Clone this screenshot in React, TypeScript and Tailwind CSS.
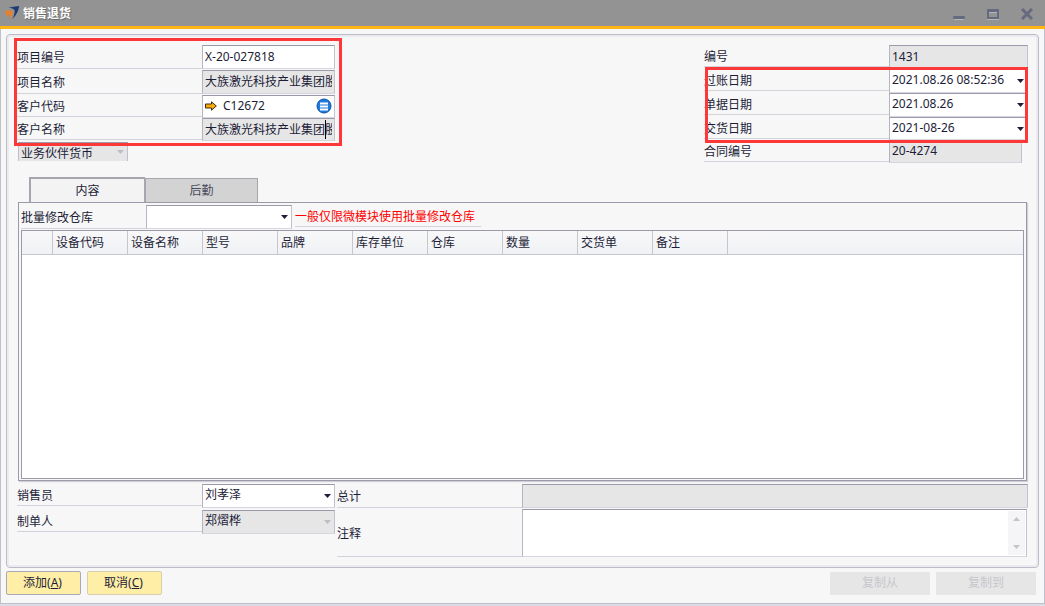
import { useState } from 'react';
import type { ReactNode } from 'react';
import clsx from 'clsx';

const columns = ['设备代码', '设备名称', '型号', '品牌', '库存单位', '仓库', '数量', '交货单', '备注'];

const company = '大族激光科技产业集团股份有限公司';

const fieldClass =
    'block w-full h-full min-w-0 border border-t-[#9a9aa8] border-l-[#b4b4c2] border-r-[#c2c2ce] border-b-[#d6d6de] rounded-none px-0.5 pb-0.5 outline-none';

const Logo = () => (
    <svg width="16" height="16" viewBox="0 0 16 16" aria-hidden="true">
        <path d="M4.5 2.8 Q9 1.4 15.2 1 Q14.2 8.5 8.2 14.2 Q11 9 10.6 5.2 Q9 3 4.5 2.8 Z" fill="#1f3b73" />
        <path d="M0.4 6.3 Q4 5 9 6 Q9 11 5.2 14.2 Q6.3 11.4 5.6 9.4 Q3.6 9.6 2 11.5 Q3 8.3 0.4 6.3 Z" fill="#e8802a" />
    </svg>
);

const Caret = ({ muted }: { muted?: boolean }) => (
    <svg
        width="7"
        height="4"
        viewBox="0 0 7 4"
        aria-hidden="true"
        className={clsx('pointer-events-none absolute right-1 top-1/2 -mt-0.5', muted ? 'text-[#bdbdc3]' : 'text-[#1d1d38]')}
    >
        <path d="M0 0 H7 L3.5 4 Z" fill="currentColor" />
    </svg>
);

type RowProps = {
    id: string;
    label: string;
    tall?: boolean;
    className?: string;
    fieldWidth: string;
    children: ReactNode;
};

const Row = ({ id, label, tall, className, fieldWidth, children }: RowProps) => (
    <div className={clsx('flex items-start', className)}>
        <label
            htmlFor={id}
            className={clsx('flex w-[185px] shrink-0 items-center border-b border-[#d3d3dc] pt-0.5', tall ? 'h-6' : 'h-[22px]')}
        >
            {label}
        </label>
        <div className={clsx('relative h-full', fieldWidth)}>{children}</div>
    </div>
);

const TextField = ({ id, value, readOnly }: { id: string; value: string; readOnly?: boolean }) => (
    <input
        id={id}
        type="text"
        defaultValue={value}
        readOnly={readOnly}
        className={clsx(fieldClass, readOnly ? 'bg-[#e6e6e6]' : 'bg-white')}
    />
);

const SelectField = ({ id, value, disabled }: { id: string; value: string; disabled?: boolean }) => (
    <>
        <select
            id={id}
            defaultValue={value}
            disabled={disabled}
            className={clsx(fieldClass, 'appearance-none disabled:opacity-100', disabled ? 'bg-[#e6e6e6]' : 'bg-white')}
        >
            <option value={value}>{value}</option>
        </select>
        <Caret muted={disabled} />
    </>
);

const TitleBar = () => (
    <header className="flex h-[29px] shrink-0 items-center border-b-3 border-[#fdb515] bg-[#939393] pl-1 pr-3">
        <Logo />
        <h1 className="ml-[3px] flex-1 pt-0.5 font-bold text-white [text-shadow:1px_1px_1px_#666]">销售退货</h1>
        <div className="flex gap-[22px] pt-0.5 text-[#666a7e]">
            <button type="button" aria-label="最小化">
                <svg width="12" height="12" viewBox="0 0 12 12">
                    <rect x="0" y="8" width="12" height="3" rx="1" fill="currentColor" />
                    <path d="M1 11.5 H11" stroke="#b5b5ba" />
                </svg>
            </button>
            <button type="button" aria-label="最大化">
                <svg width="12" height="12" viewBox="0 0 12 12">
                    <path d="M0 1 H12 V11 H0 Z M2 4 V9 H10 V4 Z" fill="currentColor" fillRule="evenodd" />
                    <path d="M2 4.5 H10 M0 11.5 H12" stroke="#b5b5ba" />
                </svg>
            </button>
            <button type="button" aria-label="关闭">
                <svg width="12" height="12" viewBox="0 0 12 12">
                    <path d="M1 1 L11 11 M11 1 L1 11" stroke="currentColor" strokeWidth="3" />
                </svg>
            </button>
        </div>
    </header>
);

const CustomerFields = () => (
    <div className="relative w-[318px]">
        <Row id="projectNo" label="项目编号" tall className="mb-px h-6" fieldWidth="w-[133px]">
            <TextField id="projectNo" value="X-20-027818" />
        </Row>
        <Row id="projectName" label="项目名称" tall className="mb-px h-6" fieldWidth="w-[133px]">
            <TextField id="projectName" value={company} readOnly />
        </Row>
        <Row id="customerCode" label="客户代码" className="h-[23px]" fieldWidth="w-[133px]">
            <div className={clsx(fieldClass, 'flex items-center bg-white')}>
                <svg width="12" height="10" viewBox="0 0 12 10" className="shrink-0" aria-hidden="true">
                    <path d="M0.5 3 H6.5 V0.8 L11.3 5 L6.5 9.2 V7 H0.5 Z" fill="#fdab0c" stroke="#3a2c10" strokeWidth="1" />
                </svg>
                <input id="customerCode" type="text" defaultValue="C12672" className="ml-1.5 min-w-0 flex-1 outline-none" />
                <button type="button" aria-label="选择客户" className="shrink-0">
                    <svg width="16" height="16" viewBox="0 0 16 16">
                        <circle cx="8" cy="8" r="7" fill="#1c7bdc" stroke="#0c4fa8" />
                        <path d="M4 5.5 H12 M4 8.5 H12 M4 11.5 H12" stroke="#fff" strokeWidth="2" />
                    </svg>
                </button>
            </div>
        </Row>
        <Row id="customerName" label="客户名称" className="h-[23px]" fieldWidth="w-[133px]">
            <TextField id="customerName" value={company} readOnly />
            <span className="absolute bottom-0.5 right-[9px] top-0.5 w-px bg-black" />
        </Row>
        <div className="relative ml-px mt-px h-[19px] w-[110px]">
            <select
                aria-label="货币"
                disabled
                className="block h-full w-full appearance-none border-x border-t-2 border-[#c0c0ca] border-t-[#9a9aa8] bg-[#e6e6e6] px-0.5 pt-0.5 leading-4 disabled:opacity-100"
            >
                <option>业务伙伴货币</option>
            </select>
            <Caret muted />
        </div>
        {/* highlight frame */}
        <div className="pointer-events-none absolute -left-[3px] -right-[7px] -top-[7px] h-[108px] border-3 border-[#fe3838]" />
    </div>
);

const DocumentFields = () => (
    <div className="relative w-[324px]">
        <Row id="docNo" label="编号" className="h-6" fieldWidth="w-[139px]">
            <TextField id="docNo" value="1431" readOnly />
        </Row>
        <Row id="postDate" label="过账日期" className="h-6" fieldWidth="w-[139px]">
            <SelectField id="postDate" value="2021.08.26 08:52:36" />
        </Row>
        <Row id="docDate" label="单据日期" className="h-6" fieldWidth="w-[139px]">
            <SelectField id="docDate" value="2021.08.26" />
        </Row>
        <Row id="dueDate" label="交货日期" className="h-[23px]" fieldWidth="w-[139px]">
            <SelectField id="dueDate" value="2021-08-26" />
        </Row>
        <Row id="contractNo" label="合同编号" className="h-[23px]" fieldWidth="w-[133px]">
            <TextField id="contractNo" value="20-4274" readOnly />
        </Row>
        <div className="pointer-events-none absolute left-px right-0 top-[22px] h-[76px] border-3 border-[#fe3838]" />
    </div>
);

const ContentPanel = () => (
    <div className="mx-px flex flex-1 flex-col border border-[#9a9aa8] bg-[#f7f7f7] px-0.5 pb-px shadow-[1px_1px_1px_#d0d0d8]">
        <div className="flex h-[27px] items-start pt-0.5">
            <label htmlFor="warehouse" className="flex h-6 w-[125px] items-center border-b border-[#d3d3dc] pt-0.5">
                批量修改仓库
            </label>
            <div className="relative h-6 w-[146px]">
                <SelectField id="warehouse" value="" />
            </div>
            <p className="ml-[3px] flex h-[22px] items-center border-b border-[#d3d3dc] pr-1.5 pt-0.5 text-[#ff0000]">
                一般仅限微模块使用批量修改仓库
            </p>
        </div>
        <div className="flex-1 border border-[#9a9aa8] bg-white">
            <table className="w-full table-fixed border-separate border-spacing-0">
                <thead>
                    <tr className="h-6 bg-linear-to-b from-[#f8f8f9] to-[#eff1f4]">
                        <th className="w-[31px] border-b border-r border-[#c6c6d0]" />
                        {columns.map((name) => (
                            <th
                                key={name}
                                className="w-[75px] border-b border-r border-[#c6c6d0] p-0 pl-[3px] text-left font-normal"
                            >
                                {name}
                            </th>
                        ))}
                        <th className="border-b border-[#c6c6d0]" />
                    </tr>
                </thead>
                <tbody />
            </table>
        </div>
    </div>
);

const SummaryFields = () => (
    <div className="mt-[3px] flex gap-0.5">
        <div className="w-[318px] shrink-0">
            <Row id="seller" label="销售员" className="mb-0.5 h-6" fieldWidth="w-[133px]">
                <SelectField id="seller" value="刘孝泽" />
            </Row>
            <Row id="creator" label="制单人" className="h-6" fieldWidth="w-[133px]">
                <SelectField id="creator" value="郑熠桦" disabled />
            </Row>
        </div>
        <div className="min-w-0 flex-1">
            <Row id="total" label="总计" tall className="mb-px h-6" fieldWidth="flex-1">
                <TextField id="total" value="" readOnly />
            </Row>
            <div className="flex h-12 pr-px">
                <label htmlFor="remark" className="flex w-[185px] shrink-0 items-center border-b border-[#d3d3dc] pt-0.5">
                    注释
                </label>
                <div className="relative flex-1">
                    <textarea id="remark" className={clsx(fieldClass, 'resize-none bg-white')} />
                    <div className="absolute bottom-0.5 right-0.5 top-0.5 flex w-[17px] flex-col items-center justify-between bg-[#f5f5f7] py-1.5 text-[#c4c4c9]">
                        <svg width="7" height="4" viewBox="0 0 7 4">
                            <path d="M0 4 H7 L3.5 0 Z" fill="currentColor" />
                        </svg>
                        <svg width="7" height="4" viewBox="0 0 7 4">
                            <path d="M0 0 H7 L3.5 4 Z" fill="currentColor" />
                        </svg>
                    </div>
                </div>
            </div>
        </div>
    </div>
);

const App = () => {
    const [tab, setTab] = useState('content');

    const tabClass = (name: string) =>
        clsx(
            'border-[#a6a6ae]',
            tab === name ? 'h-[25px] w-[116px] border-l-2 border-t-2 border-r bg-[#f3f3f3]' : 'h-6 w-[113px] border-x border-t bg-[#d3d3d3] text-[#4a4a5c]'
        );

    return (
        <div className="flex min-h-screen flex-col bg-[#dcdce4] pb-0.5 text-[12px] leading-4 text-[#1d1d38] font-['Noto_Sans','Noto_Sans_CJK_SC',sans-serif]">
            <TitleBar />
            <div className="flex flex-1 flex-col border border-t-0 border-[#c0c0cc] bg-[#f7f7f7] px-[5px] pb-2 pt-[5px]">
                <main className="flex flex-1 flex-col rounded-sm border border-[#bcbcc8] p-2.5 shadow-[inset_0_0_0_2px_#ebebf0]">
                    <div className="flex items-start justify-between">
                        <CustomerFields />
                        <DocumentFields />
                    </div>
                    <div className="ml-3 mt-3.5 flex items-end">
                        <button type="button" className={tabClass('content')} onClick={() => setTab('content')}>
                            内容
                        </button>
                        <button type="button" className={tabClass('logistics')} onClick={() => setTab('logistics')}>
                            后勤
                        </button>
                    </div>
                    <ContentPanel />
                    <SummaryFields />
                </main>
                <footer className="mt-[3px] flex items-center gap-1.5 pr-[3px]">
                    <button type="button" className="h-6 w-[75px] rounded-xs border border-[#a9a9b8] bg-[#ffeea5] pr-0.5">
                        添加(<u>A</u>)
                    </button>
                    <button type="button" className="h-6 w-[75px] rounded-xs border border-[#d5cfae] bg-[#ffeea5] pr-0.5">
                        取消(<u>C</u>)
                    </button>
                    <button type="button" disabled className="ml-auto h-[23px] w-[100px] bg-[#e6e6e6] text-[#c6c6cc]">
                        复制从
                    </button>
                    <button type="button" disabled className="h-[23px] w-[100px] bg-[#e6e6e6] text-[#c6c6cc]">
                        复制到
                    </button>
                </footer>
            </div>
        </div>
    );
};

export default App;
